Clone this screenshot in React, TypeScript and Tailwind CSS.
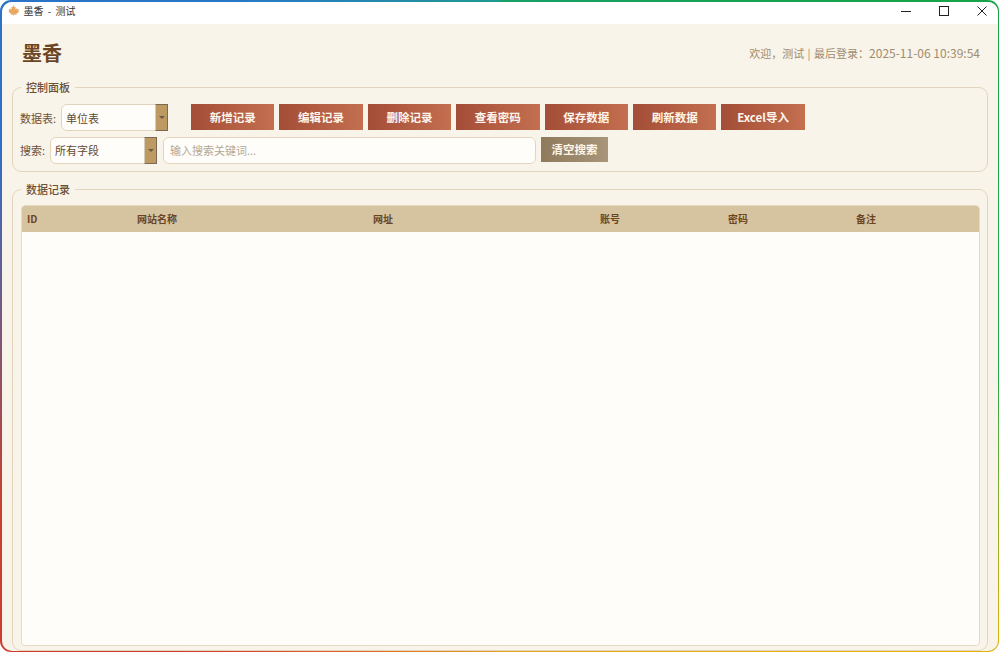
import React from 'react';

const actions = ['新增记录', '编辑记录', '删除记录', '查看密码', '保存数据', '刷新数据', 'Excel导入'];

const columns = [
  { name: 'ID', width: 'w-[110px]' },
  { name: '网站名称', width: 'w-[236px]' },
  { name: '网址', width: 'w-[227px]' },
  { name: '账号', width: 'w-[128px]' },
  { name: '密码', width: 'w-[128px]' },
  { name: '备注', width: 'flex-1' },
];

const Combo: React.FC<{ label: string; leading: string }> = ({ label, leading }) => (
  <div className="flex h-[27px] w-[107px] items-stretch rounded-[6px] border border-[#e3d5bd] bg-[#fffdf9] pl-1 text-[11px] text-[#5f4a33]">
    <span className={`flex-1 ${leading}`}>{label}</span>
    <span className="-mr-px -my-px flex w-[13px] items-center justify-center border border-[#7a6a55] border-l-[#d8cdbb] bg-[#bd9a62]">
      <span className="h-0 w-0 border-x-[3px] border-t-[3px] border-x-transparent border-t-[#6b5a45]" />
    </span>
  </div>
);

const GroupBox: React.FC<{ title: string; className: string; children: React.ReactNode }> = ({ title, className, children }) => (
  <div className={`relative rounded-[9px] border border-[#e3d5bd] ${className}`}>
    <span className="absolute -top-[8px] left-[8px] bg-[#f9f4ea] px-[5px] text-[11px] leading-[15px] font-medium text-[#6b5138]">{title}</span>
    {children}
  </div>
);

export default function App() {
  return (
    <div className="h-[652px] w-[999px] overflow-hidden rounded-[11px] bg-[conic-gradient(#18a06a_0deg,#16a34a_50deg,#22a84a_95deg,#eab308_125deg,#e8a020_180deg,#d43a30_225deg,#c8402f_250deg,#2f6fc8_290deg,#2878c8_320deg,#1f9a90_360deg)] p-[1.5px] font-['Noto_Sans_CJK_SC','Noto_Sans',sans-serif]">
      <div className="flex h-full flex-col overflow-hidden rounded-[10px] bg-[#f9f4ea]">
        <div className="flex h-[22px] shrink-0 items-center bg-white pb-[4px] pl-[5px]">
          <svg viewBox="0 0 24 24" className="h-[13px] w-[13px]" fill="#e8a860">
            <path d="M12 2l2 4 2-1-.5 5 3-2 .5 2 3-.5-1 3.500 1.500 1-5 4 .5 2-5-.7V22h-1v-2.700l-5 .7.500-2-5-4 1.500-1-1-3.500 3 .5.500-2 3 2L8 5l2 1z" />
          </svg>
          <span className="ml-[4px] text-[10px] text-[#333] [word-spacing:2px]">墨香 - 测试</span>
          <div className="ml-auto flex items-center gap-[26px] pr-[10px] text-[#222]">
            <svg viewBox="0 0 12 12" className="h-3 w-3" stroke="currentColor" fill="none"><path d="M1 6.500h10" /></svg>
            <svg viewBox="0 0 12 12" className="h-3 w-3" stroke="currentColor" fill="none"><rect x="1.500" y="1.500" width="9" height="9" /></svg>
            <svg viewBox="0 0 12 12" className="h-3 w-3" stroke="currentColor" fill="none"><path d="M1.500 1.500l9 9M10.500 1.500l-9 9" /></svg>
          </div>
        </div>

        <div className="flex min-h-0 flex-1 flex-col pl-[10.500px] pr-[9.500px]">
          <div className="flex h-[63px] shrink-0 items-center justify-between pb-[4px] pl-[10px] pr-[8px]">
            <h1 className="text-[20px] font-bold text-[#6b4423]">墨香</h1>
            <span className="text-[12px] text-[#a08c6f]">
              <span className="text-[11px] [word-spacing:1px]">欢迎，测试 | 最后登录：</span>2025-11-06 10:39:54
            </span>
          </div>

          <GroupBox title="控制面板" className="h-[85px] shrink-0 pl-[7px] pt-[16px]">
            <div className="flex items-start">
              <span className="w-[41px] text-[11px] leading-[29px] text-[#6b5138]">数据表:</span>
              <Combo label="单位表" leading="leading-[27px]" />
              <div className="ml-[23px] flex gap-[5px]">
                {actions.map((a) => (
                  <button key={a} className="h-[26px] w-[83.400px] bg-gradient-to-r from-[#a44d37] to-[#c46f50] pt-[2px] text-[11.500px] font-semibold text-[#fdf6ec]">
                    {a}
                  </button>
                ))}
              </div>
            </div>
            <div className="mt-[4px] flex items-start">
              <span className="w-[30px] text-[11px] leading-[27px] text-[#6b5138]">搜索:</span>
              <Combo label="所有字段" leading="leading-[25px]" />
              <input
                readOnly
                placeholder="输入搜索关键词..."
                className="ml-[6px] h-[27px] w-[373px] rounded-[6px] border border-[#e3d5bd] bg-[#fffdf9] px-[6px] text-[11px] outline-none placeholder:text-[#b3a896]"
              />
              <button className="ml-[5px] h-[25px] w-[67px] bg-gradient-to-r from-[#8f7a5c] to-[#a8957a] pt-[2px] text-[11.500px] font-semibold text-[#fdf6ec]">
                清空搜索
              </button>
            </div>
          </GroupBox>

          <GroupBox title="数据记录" className="mt-[17px] min-h-0 flex-1 pl-[8px] pr-[7px] pt-[15px] pb-[4px]">
            <div className="flex h-full flex-col overflow-hidden rounded-[4px] border border-[#e6dac5] bg-[#fffdf9]">
              <div className="flex h-[26px] shrink-0 items-center bg-[#d6c4a1] px-[5px] text-[10px] font-semibold text-[#6b4423]">
                {columns.map((c) => (
                  <span key={c.name} className={c.width}>{c.name}</span>
                ))}
              </div>
            </div>
          </GroupBox>
        </div>
      </div>
    </div>
  );
}
